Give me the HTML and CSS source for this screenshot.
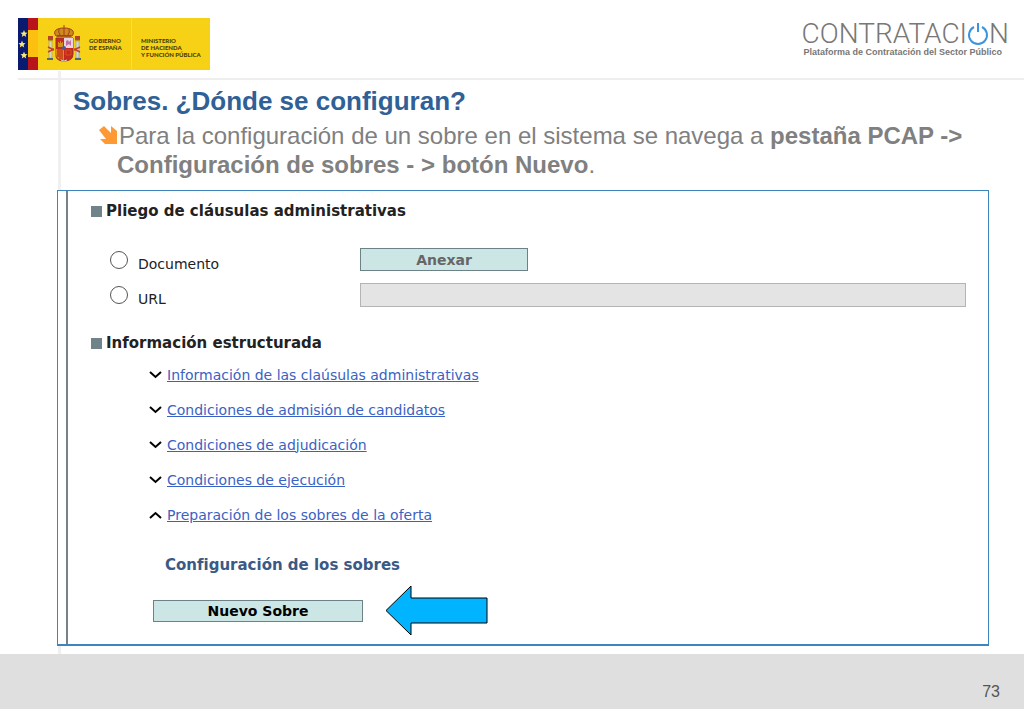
FILE: index.html
```html
<!DOCTYPE html>
<html lang="es">
<head>
    <meta charset="utf-8">
    <title>Sobres. ¿Dónde se configuran?</title>
    <link rel="stylesheet" href="styles.css">
</head>
<body>
    <header class="top">
        <div class="gov">
            <svg class="gov-flag" viewBox="0 0 66 52" width="66" height="52" aria-hidden="true">
                <rect width="10" height="52" fill="#0a1a6e"/>
                <rect x="10" width="10" height="52" fill="#fdc010"/>
                <rect x="10" width="10" height="12" fill="#b8141c"/>
                <rect x="10" y="39" width="10" height="13" fill="#b8141c"/>
                <g fill="#f6e878">
                    <path id="star" d="M6 12l1 2.500 2.500.2-1.900 1.700.6 2.500-2.200-1.400-2.200 1.400.6-2.500-1.900-1.700 2.500-.2z"/>
                    <use href="#star" x="-2" y="10.500"/>
                    <use href="#star" y="21.500"/>
                </g>
                <!-- pillars -->
                <g fill="#d5d8c8" stroke="#87906c" stroke-width=".5">
                    <rect x="31" y="23" width="3" height="17"/>
                    <rect x="58" y="23" width="3" height="17"/>
                </g>
                <path d="M30 18h5v4h-5zM57 18h5v4h-5z" fill="#b0452c"/>
                <path d="M30 22h5M57 22h5" stroke="#8d6c16"/>
                <path d="M29 40h6v2h-6zM57 40h6v2h-6z" fill="#4f6a75"/>
                <path d="M30 29l6 3M30 34l6-3M62 29l-6 3M62 34l-6-3" stroke="#c0402a" stroke-width="1.500"/>
                <!-- crown -->
                <path d="M38 18c-4-5 1-8 8-8s12 3 8 8z" fill="#cf8a1c" stroke="#96401c"/>
                <path d="M46 7v10M41 11q-1 3 1 6M51 11q1 3-1 6" stroke="#a83a20" fill="none"/>
                <path d="M39 18h14" stroke="#8c2a18"/>
                <!-- shield -->
                <path d="M38 20h17v16q0 7-9 7t-8-7z" fill="#c9281f" stroke="#9a3320"/>
                <path d="M46 20h9v10h-9z" fill="#e8d4dc"/>
                <path d="M48 28v-5l2-1 1 2 2-2v6l-2-2z" fill="#c070a4"/>
                <path d="M38 31h8v11q-8 0-8-6z" fill="#e08a18"/>
                <path d="M40 31v8M42 31v10M44 31v11" stroke="#b8141c"/>
                <path d="M40 29v-5h1v1h1v-2h1v2h1v-1h1v5z" fill="#d98e1b"/>
                <path d="M48 32h5v5h-5z" fill="none" stroke="#d8601f" stroke-width=".7"/>
                <circle cx="46" cy="30" r="2" fill="#4a5b98"/>
                <path d="M43 42q3 2 6 0" stroke="#d9d4bd" fill="none"/>
            </svg>
            <p class="gov-name">GOBIERNO<br>DE ESPAÑA</p>
            <p class="gov-dept">MINISTERIO<br>DE HACIENDA<br>Y FUNCIÓN PÚBLICA</p>
        </div>
        <div class="brand">
            <div class="brand-name">CONTRATACI<svg viewBox="0 0 22 24" width="22" height="24" role="img" aria-label="Ó"><path d="M7 5a9 9 0 1 0 8 0M11 1v9" fill="none" stroke="#3d94de" stroke-width="2"/></svg>N</div>
            <div class="brand-sub">Plataforma de Contratación del Sector Público</div>
        </div>
    </header>

    <main>
        <h1>Sobres. ¿Dónde se configuran?</h1>
        <p class="intro"><svg class="bullet" viewBox="0 0 18 18" width="18" height="18" aria-hidden="true"><path d="M0 4l5-4 7 7V0l6 5v13H6l-5-5h6z" fill="#ff9933"/></svg>Para la configuración de un sobre en el sistema se navega a <b>pestaña PCAP -&gt; Configuración de sobres - &gt; botón Nuevo</b>.</p>

        <section class="panel">
            <form class="panel-body">
                <h2>Pliego de cláusulas administrativas</h2>
                <div class="fields">
                    <input type="radio" name="pliego" id="documento">
                    <label for="documento">Documento</label>
                    <button type="button" class="btn btn-attach">Anexar</button>
                    <input type="radio" name="pliego" id="url">
                    <label for="url">URL</label>
                    <input type="text" class="url-box" aria-label="URL">
                </div>

                <h2>Información estructurada</h2>
                <ul class="sections">
                    <li><svg viewBox="0 0 13 8" width="13" height="8"><path d="M1 1l5.500 5L12 1"/></svg><a href="#">Información de las claúsulas administrativas</a></li>
                    <li><svg viewBox="0 0 13 8" width="13" height="8"><path d="M1 1l5.500 5L12 1"/></svg><a href="#">Condiciones de admisión de candidatos</a></li>
                    <li><svg viewBox="0 0 13 8" width="13" height="8"><path d="M1 1l5.500 5L12 1"/></svg><a href="#">Condiciones de adjudicación</a></li>
                    <li><svg viewBox="0 0 13 8" width="13" height="8"><path d="M1 1l5.500 5L12 1"/></svg><a href="#">Condiciones de ejecución</a></li>
                    <li><svg viewBox="0 0 13 8" width="13" height="8"><path d="M1 7l5.500-5L12 7"/></svg><a href="#">Preparación de los sobres de la oferta</a></li>
                </ul>

                <h3>Configuración de los sobres</h3>
                <div class="new-row">
                    <button type="button" class="btn btn-new">Nuevo Sobre</button>
                    <svg viewBox="0 0 103 51" width="103" height="51" aria-hidden="true"><path d="M1 25.500L26 1v12h76v25H26v12z" fill="#00b4ff" stroke="#000"/></svg>
                </div>
            </form>
        </section>
    </main>

    <footer>73</footer>
</body>
</html>
```
FILE: styles.css
```css
* {
    box-sizing: border-box;
}
body {
    margin: 0;
    min-height: 100vh;
    display: flex;
    flex-direction: column;
    font-family: "Liberation Sans", Arial, sans-serif;
    background: linear-gradient(#f0f0f0, #f0f0f0) 58px 71px / 3px 100% no-repeat #fff;
}
h1, h2, h3, p, ul {
    margin: 0;
    padding: 0;
}
.top {
    display: flex;
    justify-content: space-between;
    align-items: flex-start;
    height: 80px;
    margin-left: 18px;
    padding: 18px 15px 0 0;
    border-bottom: 2px solid #eee;
}
.gov {
    display: flex;
    align-items: center;
    width: 192px;
    height: 52px;
    background-color: #f6d116;
    color: #4a3c08;
    font-family: Lato, sans-serif;
    font-size: 6px;
    font-weight: 900;
    line-height: 7px;
    white-space: nowrap;
}
.gov-name {
    width: 47px;
    padding-left: 5px;
}
.gov-dept {
    display: flex;
    align-items: center;
    height: 52px;
    padding-top: 6px;
    padding-left: 9px;
    border-left: 1px solid #f9dc4a;
}
.brand {
    padding-top: 3px;
    color: #777;
    white-space: nowrap;
}
.brand-name {
    display: flex;
    align-items: center;
    font-family: Roboto, sans-serif;
    font-size: 28px;
    font-weight: 300;
    line-height: 26px;
}
.brand-sub {
    padding-left: 2px;
    font-size: 9px;
    font-weight: bold;
    line-height: 10px;
}
main {
    padding: 6px 35px 8px 57px;
}
h1 {
    padding-left: 16px;
    color: #2f6096;
    font-size: 26px;
    line-height: 30px;
}
.intro {
    padding: 5px 0 11px 60px;
    color: #808080;
    font-size: 24px;
    line-height: 29px;
    text-indent: -18px;
}
.bullet {
    margin-right: 2px;
}
.panel {
    padding-left: 8px;
    border: 1px solid #3d85bb;
    border-bottom-width: 2px;
    background-color: #fff;
}
.panel-body {
    padding: 10px 22px 8px 23px;
    border-left: 2px solid #75828a;
    font-family: "DejaVu Sans", Verdana, sans-serif;
    font-size: 14px;
    color: #222;
}
h2 {
    display: flex;
    align-items: center;
    gap: 4px;
    font-size: 15px;
    line-height: 20px;
}
h2::before {
    content: "";
    width: 11px;
    height: 11px;
    background-color: #70838b;
}
.fields {
    display: grid;
    grid-template-columns: 18px 212px 1fr;
    grid-auto-rows: 35px;
    align-items: center;
    column-gap: 10px;
    margin: 21px 0;
    padding-left: 19px;
}
.fields label {
    padding-top: 8px;
}
.fields input[type="radio"] {
    appearance: none;
    width: 18px;
    height: 18px;
    margin: 0;
    border: 1px solid #555;
    border-radius: 50%;
    background-color: #fff;
}
.btn {
    padding: 0;
    border: 1px solid #6d8287;
    background-color: #cce6e6;
    font-family: inherit;
    font-size: 14px;
    font-weight: bold;
}
.btn-attach {
    width: 168px;
    height: 23px;
    color: #666;
}
.url-box {
    height: 24px;
    border: 1px solid #b4b4b4;
    background-color: #e4e4e4;
}
.sections {
    list-style: none;
    margin: 4px 0 23px;
    padding-left: 58px;
}
.sections li {
    display: flex;
    align-items: center;
    gap: 5px;
    height: 35px;
}
.sections path {
    fill: none;
    stroke: #000;
    stroke-width: 2;
}
.sections a {
    color: #3a62c4;
}
h3 {
    padding-left: 74px;
    color: #3a5a85;
    font-size: 15px;
    line-height: 20px;
}
.new-row {
    display: flex;
    align-items: center;
    gap: 22px;
    margin-top: 10px;
    padding-left: 62px;
}
.btn-new {
    width: 210px;
    height: 22px;
    color: #000;
}
footer {
    flex: 1;
    min-height: 55px;
    padding: 28px 24px 0 0;
    background-color: #dfdfdf;
    color: #555;
    font-size: 16px;
    line-height: 20px;
    text-align: right;
}
```
